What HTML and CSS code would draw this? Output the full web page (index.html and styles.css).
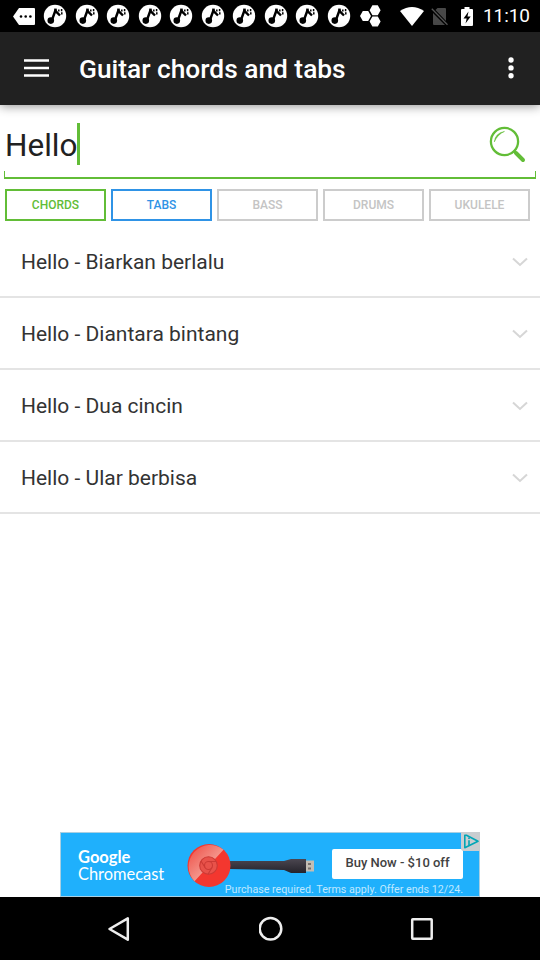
FILE: index.html
```html
<!DOCTYPE html>
<html lang="en">
<head>
<meta charset="utf-8">
<title>Guitar chords and tabs</title>
<link rel="stylesheet" href="styles.css">
</head>
<body>
<svg class="defs" width="0" height="0" aria-hidden="true">
  <defs>
    <symbol id="note" viewBox="0 0 24 24">
      <circle cx="12" cy="12" r="11.2" fill="#fff"/>
      <path d="M8.800 16.500 12.300 6.800 17 11.500" fill="none" stroke="#000" stroke-width="2.400"/>
      <circle cx="7.800" cy="16.600" r="3.300"/>
      <path d="M11.300 5.800h2.500" stroke="#000" stroke-width="2.400"/>
      <path d="M15.800 5.500v2M18.600 5v2.200M18.800 8.300v2.200" stroke="#000" stroke-width="1.500"/>
    </symbol>
    <symbol id="chevron" viewBox="0 0 16 10">
      <path d="M1 1.5 8 8l7-6.500" fill="none" stroke="#d6d6d6" stroke-width="2"/>
    </symbol>
  </defs>
</svg>
<div class="screen">
  <header class="status">
    <svg class="tag" viewBox="0 0 22 17"><path d="M6 0h15q1 0 1 1v15q0 1-1 1H6L0 8.500z" fill="#fff"/><circle cx="8" cy="8.500" r="1.300"/><circle cx="12.700" cy="8.500" r="1.300"/><circle cx="17.400" cy="8.500" r="1.300"/></svg>
    <div class="notes">
      <svg><use href="#note"/></svg><svg><use href="#note"/></svg><svg><use href="#note"/></svg><svg><use href="#note"/></svg><svg><use href="#note"/></svg><svg><use href="#note"/></svg><svg><use href="#note"/></svg><svg><use href="#note"/></svg><svg><use href="#note"/></svg><svg><use href="#note"/></svg>
    </div>
    <svg class="hex" viewBox="0 0 21 22" fill="#fff"><path d="M0 11l2.800-5h5.400L11 11l-2.800 5H2.800zM9.600 5.200 12.400.3h5.400l2.800 4.900-2.800 5h-5.400zM9.600 16.600l2.800-5h5.400l2.800 5-2.800 4.900h-5.400z"/></svg>
    <svg class="wifi" viewBox="0 0 24 19"><path d="M0 4Q12-4 24 4L12 19z" fill="#fff"/></svg>
    <svg class="sim" viewBox="0 0 18 19"><path d="M6.500 1H14q1 0 1 1v12L4.500 3zM2 6l12 12H3q-1 0-1-1z" fill="#484848"/><path d="M.8 1.800 16.500 17.800" stroke="#555" stroke-width="1.300"/></svg>
    <svg class="battery" viewBox="0 0 12 19"><path d="M3.500 0h5v2H11q1 0 1 1v15q0 1-1 1H1q-1 0-1-1V3q0-1 1-1h2.500z" fill="#fff"/><path d="M7.500 4.500 2.500 11.500h3.200L4.500 16.500 9.700 9.500H6.500z"/></svg>
    <span class="clock">11:10</span>
  </header>
  <div class="appbar">
    <svg class="menu" viewBox="0 0 25 18"><path d="M0 1.500h25M0 9h25M0 16.500h25" stroke="#fff" stroke-width="2.600"/></svg>
    <h1>Guitar chords and tabs</h1>
    <svg class="more" viewBox="0 0 6 22" fill="#fff"><circle cx="3" cy="3" r="2.700"/><circle cx="3" cy="10.900" r="2.700"/><circle cx="3" cy="18.800" r="2.700"/></svg>
  </div>
  <main>
    <div class="search">
      <span class="query">Hello</span><span class="caret"></span>
      <svg class="lens" viewBox="0 0 37 37"><circle cx="15.500" cy="15.500" r="13.600" fill="none" stroke="#62bd37" stroke-width="2.300"/><path d="M5.300 16Q6 7.200 15.500 5.400 8.500 8.500 5.300 16z" fill="#62bd37" stroke="#62bd37" stroke-width=".5"/><path d="M24.500 24.500 28 28" stroke="#62bd37" stroke-width="2.500"/><path d="M27 27l7 7" stroke="#62bd37" stroke-width="4" stroke-linecap="round"/></svg>
    </div>
    <nav class="tabs">
      <span class="tab green">CHORDS</span><span class="tab blue">TABS</span><span class="tab">BASS</span><span class="tab">DRUMS</span><span class="tab">UKULELE</span>
    </nav>
    <ul class="results">
      <li><span>Hello - Biarkan berlalu</span><svg><use href="#chevron"/></svg></li>
      <li><span>Hello - Diantara bintang</span><svg><use href="#chevron"/></svg></li>
      <li><span>Hello - Dua cincin</span><svg><use href="#chevron"/></svg></li>
      <li><span>Hello - Ular berbisa</span><svg><use href="#chevron"/></svg></li>
    </ul>
  </main>
  <aside class="ad">
    <div class="brand"><b>Google</b><span>Chromecast</span></div>
    <svg class="device" viewBox="0 0 130 46">
      <defs><linearGradient id="shine" x1="0" y1="0" x2="1" y2="1"><stop offset="0" stop-color="#ee4a42"/><stop offset=".6" stop-color="#f4988e"/></linearGradient>
      <linearGradient id="cable" x1="0" y1="0" x2="0" y2="1"><stop offset="0" stop-color="#4b4650"/><stop offset="1" stop-color="#25232b"/></linearGradient></defs>
      <path d="M42 18H97l7-2h15v14h-15l-7-3-55-1z" fill="url(#cable)"/>
      <path d="M119 17.500h8v11h-8z" fill="#c3bdb4"/><path d="M121 20h3v2h-3zM121 24.500h3v2h-3z" fill="#77716d"/>
      <circle cx="22" cy="22.500" r="21.500" fill="#f3372f"/>
      <path d="M7.500 38.300A21.500 21.500 0 0 1 36.500 6.700z" fill="url(#shine)"/>
      <circle cx="21.500" cy="22.500" r="8.800" fill="#e8524a"/>
      <g fill="none" stroke="#cc3a35" stroke-width="1.100"><circle cx="21.500" cy="22.500" r="8.800"/><circle cx="21.500" cy="22.500" r="4"/><path d="M21.500 18.500h7.500M18 24.500l-4-6.500M25 24.500l-4 6.700"/></g>
    </svg>
    <span class="buy">Buy Now - $10 off</span>
    <small>Purchase required. Terms apply. Offer ends 12/24.</small>
    <svg class="choices" viewBox="0 0 19 19"><path d="M0 0h19v19H3q-3 0-3-3z" fill="#c9cdd0"/><path d="M3.800 3.300v12.400L17 9.300 5.500 3.300z" fill="none" stroke="#00a6b6" stroke-width="1.600" stroke-linejoin="round"/><path d="M8 5.500v1.500M8 8.200v5" stroke="#00a6b6" stroke-width="1.600"/></svg>
  </aside>
  <footer class="navbar">
    <svg viewBox="0 0 24 26"><path d="M2.500 13 20.800 2.300v21.400z"/></svg>
    <svg viewBox="0 0 24 26"><circle cx="11.500" cy="12.700" r="10.800"/></svg>
    <svg viewBox="0 0 24 26"><rect x="2.200" y="3.200" width="19.500" height="19.500" rx=".6"/></svg>
  </footer>
</div>
</body>
</html>
```
FILE: styles.css
```css
* { box-sizing: border-box; }
body { margin: 0; background: #fff; font-family: Roboto, "Liberation Sans", sans-serif; }
svg { display: block; flex: none; }
.defs { position: absolute; }
.screen { width: 540px; height: 960px; display: flex; flex-direction: column; overflow: hidden; }

.status { height: 32px; flex: none; background: #000; display: flex; align-items: center; padding-left: 13px; }
.tag { width: 22px; height: 17px; }
.notes { display: flex; gap: 7.500px; margin-left: 8px; }
.notes svg { width: 24px; height: 24px; }
.hex { width: 21px; height: 22px; margin-left: 9px; }
.wifi { width: 24px; height: 19px; margin-left: 19.500px; }
.sim { width: 18px; height: 19px; margin-left: 7px; }
.battery { width: 12px; height: 19px; margin-left: 12px; }
.clock { color: #fff; font-size: 19px; letter-spacing: -.1px; margin-left: 10px; line-height: 34px; }

.appbar { height: 73px; flex: none; background: #212121; display: flex; align-items: center; padding: 0 26px 0 24px; box-shadow: 0 1px 10px rgba(0,0,0,.45); position: relative; }
.menu { width: 25px; height: 18px; margin-top: -1px; }
h1 { margin: 0 auto 0 30px; color: #fff; font-size: 26.300px; font-weight: 500; line-height: 32px; white-space: nowrap; }
.more { width: 6px; height: 22px; margin-top: -1px; }

main { flex: 1; }
.search { height: 75px; margin: 0 4px; display: flex; align-items: center; padding: 3px 10px 0 1px; position: relative; }
.search::after { content: ""; position: absolute; left: 0; right: 0; bottom: 1px; height: 6px; border: solid #62bd37; border-width: 0 1.500px 2px; }
.query { font-size: 31.500px; line-height: 40px; padding-top: 4px; width: 72px; color: #212121; white-space: nowrap; }
.caret { width: 3px; height: 42px; background: #62bd37; }
.lens { width: 37px; height: 37px; margin-left: auto; }

.tabs { display: grid; grid-template-columns: repeat(5, 101px); gap: 5px; padding: 9px 5px 0; height: 46px; }
.tab { height: 32px; border: 2px solid #ccc; color: #c4c4c4; font-size: 12px; font-weight: 500; line-height: 29px; text-align: center; }
.tab.green { border-color: #62bd37; color: #62bd37; }
.tab.blue { border-color: #2f93e6; color: #2f93e6; }

.results { list-style: none; margin: 0; padding: 0; }
.results li { height: 72px; border-bottom: 2px solid #e4e4e4; display: flex; align-items: center; justify-content: space-between; padding: 2px 12px 0 21px; font-size: 21px; color: #333; }
.results svg { width: 16px; height: 10px; }

.ad { position: relative; flex: none; width: 420px; height: 65px; margin-left: 60px; background: #1fb0fc; border: 1px solid #a9cfe2; display: flex; align-items: flex-start; padding: 0 16px 0 17px; color: #fff; }
.brand { width: 109px; padding-top: 16px; font-family: Lato, sans-serif; font-size: 16.400px; line-height: 17px; display: flex; flex-direction: column; }
.brand b { font-size: 16.500px; line-height: 16px; font-weight: 700; }
.device { width: 130px; height: 46px; margin-top: 10px; }
.buy { margin: 16px 0 0 auto; width: 131px; height: 30px; flex: none; border-radius: 2px; background: #fff; color: #424242; font-size: 13px; font-weight: 500; line-height: 28px; text-align: center; }
.ad small { position: absolute; right: 16px; bottom: 0; font-size: 10.700px; line-height: 12px; color: #bfe8ff; white-space: nowrap; }
.choices { position: absolute; right: -1px; top: -1px; width: 19px; height: 19px; }

.navbar { height: 63px; flex: none; background: #000; display: flex; align-items: center; justify-content: space-between; padding: 1px 106px 0 107px; }
.navbar svg { width: 24px; height: 26px; fill: none; stroke: #eee; stroke-width: 2.500; stroke-linejoin: round; }
```
